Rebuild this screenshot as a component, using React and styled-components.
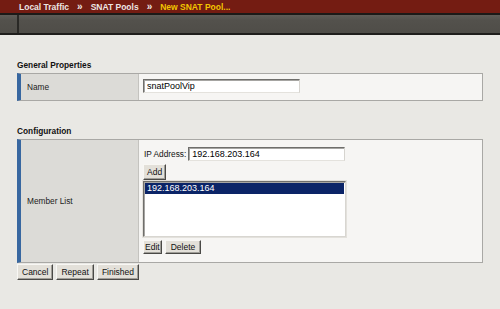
import React, { useState } from 'react';
import styled, { createGlobalStyle } from 'styled-components';

const GlobalStyle = createGlobalStyle`
  html, body {
    margin: 0;
    padding: 0;
    background-color: #e9e8e4;
  }
  body {
    font-family: "Liberation Sans", Arial, sans-serif;
    color: #000;
  }
`;

const Page = styled.div`
  width: 500px;
  height: 309px;
  overflow: hidden;
  background-color: #e9e8e4;
`;

const TopBar = styled.div`
  height: 13px;
  background-color: #741c12;
  border-bottom: 2px solid #1c1a18;
  display: flex;
  align-items: center;
  padding-left: 19px;
  gap: 8px;
  font-size: 8.5px;
  font-weight: bold;
  color: #ece6e2;
`;

const Crumb = styled.span`
  color: ${(props) => (props.current ? '#f2c400' : '#ece6e2')};
  white-space: nowrap;
`;

const Sep = styled.span`
  color: #ece6e2;
  font-size: 10px;
  line-height: 10px;
  margin-top: 1px;
`;

const ToolBar = styled.div`
  height: 18px;
  background: linear-gradient(#5f5d58, #53514c 30%, #4f4d48);
  border-bottom: 2px solid #1f1e1c;
  display: flex;
`;

const ToolBarEdge = styled.div`
  width: 17px;
  border-right: 2px solid #2a2926;
`;

const Content = styled.div`
  padding: 0 17px;
`;

const Section = styled.div`
  margin-top: 24px;
`;

const SectionTitle = styled.div`
  font-size: 8.3px;
  font-weight: bold;
  line-height: 12px;
  margin-bottom: 2px;
  color: #111;
`;

const PropTable = styled.div`
  display: grid;
  grid-template-columns: 118px 1fr;
  border: 1px solid #a9a8a5;
  border-left: 4px solid #3867a0;
`;

const LabelCell = styled.div`
  background-color: #dcdbd7;
  border-right: 1px solid #c4c3bf;
  display: flex;
  align-items: center;
  padding-left: 6px;
  font-size: 8.3px;
  color: #222;
`;

const ValueCell = styled.div`
  background-color: #f6f5f3;
  padding: ${(props) => props.pad || '5px 4px 7px'};
  display: flex;
  flex-direction: column;
  align-items: flex-start;
`;

const TextInput = styled.input`
  box-sizing: border-box;
  width: ${(props) => props.w}px;
  height: 14px;
  margin: 0;
  padding: 0 3px;
  font-family: "Liberation Sans", Arial, sans-serif;
  font-size: 9px;
  color: #000;
  background-color: #fff;
  border: 1px solid;
  border-color: #6f6e6b #d6d4cf #e4e2dd #6f6e6b;
  box-shadow: inset 1px 1px 0 #a6a5a2;
  outline: none;
`;

const FieldRow = styled.div`
  display: flex;
  align-items: center;
  gap: 2px;
`;

const FieldLabel = styled.span`
  font-size: 8.3px;
  color: #111;
  padding-left: 1px;
`;

const Button = styled.button`
  box-sizing: border-box;
  height: ${(props) => props.h || 16}px;
  margin: 0;
  padding: 0 ${(props) => (props.px === undefined ? 4 : props.px)}px;
  font-family: "Liberation Sans", Arial, sans-serif;
  font-size: 8.5px;
  color: #111;
  background-color: #e3e0d9;
  border: 1px solid;
  border-color: #f8f7f4 #4a4946 #4a4946 #f8f7f4;
  box-shadow: inset -1px -1px 0 #a09e98;
  border-radius: 0;
  cursor: default;
`;

const ListBox = styled.div`
  box-sizing: border-box;
  width: 203px;
  height: 56px;
  margin: 1px 0 3px;
  padding: 1px;
  background-color: #fff;
  border: 1px solid;
  border-color: #6f6e6b #d8d6d1 #d8d6d1 #6f6e6b;
  box-shadow: inset 1px 1px 0 #a6a5a2, 0 0 0 1px #e3e1dc;
  overflow: hidden;
`;

const Option = styled.div`
  height: 11px;
  line-height: 11px;
  font-size: 9px;
  padding-left: 2px;
  color: ${(props) => (props.selected ? '#fff' : '#000')};
  background-color: ${(props) => (props.selected ? '#0b2467' : 'transparent')};
`;

const ButtonRow = styled.div`
  display: flex;
  gap: ${(props) => props.gap || 3}px;
  margin-top: ${(props) => props.top || 0}px;
`;

function App() {
  const [poolName, setPoolName] = useState('snatPoolVip');
  const [address, setAddress] = useState('192.168.203.164');
  const [members] = useState(['192.168.203.164']);

  return (
    <Page>
      <GlobalStyle />
      <TopBar>
        <Crumb>Local Traffic</Crumb>
        <Sep>»</Sep>
        <Crumb>SNAT Pools</Crumb>
        <Sep>»</Sep>
        <Crumb current>New SNAT Pool...</Crumb>
      </TopBar>
      <ToolBar>
        <ToolBarEdge />
      </ToolBar>
      <Content>
        <Section>
          <SectionTitle>General Properties</SectionTitle>
          <PropTable>
            <LabelCell>Name</LabelCell>
            <ValueCell pad="5px 4px 7px">
              <TextInput w={157} value={poolName} onChange={(e) => setPoolName(e.target.value)} />
            </ValueCell>
          </PropTable>
        </Section>
        <Section>
          <SectionTitle>Configuration</SectionTitle>
          <PropTable>
            <LabelCell>Member List</LabelCell>
            <ValueCell pad="7px 4px 8px">
              <FieldRow>
                <FieldLabel>IP Address:</FieldLabel>
                <TextInput w={157} value={address} onChange={(e) => setAddress(e.target.value)} />
              </FieldRow>
              <ButtonRow top={3}>
                <Button px={3}>Add</Button>
              </ButtonRow>
              <ListBox>
                {members.map((member, index) => (
                  <Option key={index} selected={index === 0}>{member}</Option>
                ))}
              </ListBox>
              <ButtonRow gap={3}>
                <Button h={14} px={1}>Edit</Button>
                <Button h={14} px={5}>Delete</Button>
              </ButtonRow>
            </ValueCell>
          </PropTable>
          <ButtonRow top={1}>
            <Button>Cancel</Button>
            <Button>Repeat</Button>
            <Button>Finished</Button>
          </ButtonRow>
        </Section>
      </Content>
    </Page>
  );
}

export default App;
